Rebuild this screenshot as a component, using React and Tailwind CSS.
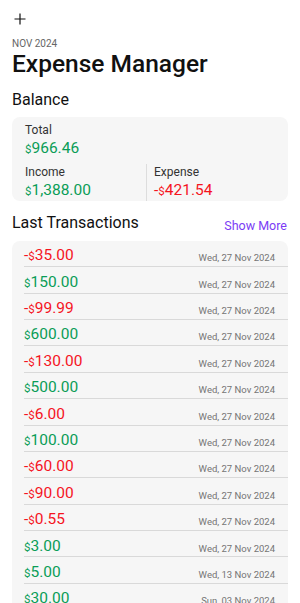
import React from "react";

const rows = [
  ["-", "35.00", "Wed, 27 Nov 2024"],
  ["+", "150.00", "Wed, 27 Nov 2024"],
  ["-", "99.99", "Wed, 27 Nov 2024"],
  ["+", "600.00", "Wed, 27 Nov 2024"],
  ["-", "130.00", "Wed, 27 Nov 2024"],
  ["+", "500.00", "Wed, 27 Nov 2024"],
  ["-", "6.00", "Wed, 27 Nov 2024"],
  ["+", "100.00", "Wed, 27 Nov 2024"],
  ["-", "60.00", "Wed, 27 Nov 2024"],
  ["-", "90.00", "Wed, 27 Nov 2024"],
  ["-", "0.55", "Wed, 27 Nov 2024"],
  ["+", "3.00", "Wed, 27 Nov 2024"],
  ["+", "5.00", "Wed, 13 Nov 2024"],
  ["+", "30.00", "Sun, 03 Nov 2024"],
];

function Amount({ sign, value }) {
  const neg = sign === "-";
  return (
    <span className={neg ? "text-[#f5141e]" : "text-[#0a9d57]"}>
      {neg ? "-" : ""}
      <span className="text-[11.5px]">$</span>
      {value}
    </span>
  );
}

export default function App() {
  return (
    <div
      className="w-[300px] h-[603px] overflow-hidden bg-white px-3 text-[#111]"
      style={{ fontFamily: "Roboto, 'Noto Sans', sans-serif" }}
    >
      <div className="h-[37.6px] pt-[13px] pl-[2px]">
        <svg width="12" height="12" viewBox="0 0 12 12" fill="none">
          <path d="M6 0.5V11.5M0.5 6H11.5" stroke="#111" strokeWidth="1.2" />
        </svg>
      </div>
      <div className="text-[10px] leading-[12px] text-[#666]">NOV 2024</div>
      <div className="text-[24.5px] leading-[28px] font-medium">Expense Manager</div>
      <div className="mt-[12.7px] text-[16px] leading-[20px]">Balance</div>

      <div className="mt-[6.5px] h-[84px] rounded-[8px] bg-[#f6f6f6] px-[13px] pt-[5px]">
        <div className="text-[12px] leading-[16px] text-[#333]">Total</div>
        <div className="text-[15.5px] leading-[20px]">
          <Amount sign="+" value="966.46" />
        </div>
        <div className="mt-[5.4px] flex">
          <div className="flex-1">
            <div className="text-[12px] leading-[16px] text-[#333]">Income</div>
            <div className="text-[15.5px] leading-[20px]">
              <Amount sign="+" value="1,388.00" />
            </div>
          </div>
          <div className="flex-1 border-l border-[#dddddd] pl-[7px]">
            <div className="text-[12px] leading-[16px] text-[#333]">Expense</div>
            <div className="text-[15.5px] leading-[20px]">
              <Amount sign="-" value="421.54" />
            </div>
          </div>
        </div>
      </div>

      <div className="mt-[12.5px] flex items-baseline justify-between">
        <div className="text-[16px] leading-[20px]">Last Transactions</div>
        <div className="text-[12.5px] leading-[20px] text-[#7b3cf5] translate-y-[2px] pr-[1px]">Show More</div>
      </div>

      <div className="mt-[6.5px] rounded-t-[8px] bg-[#f6f6f6] pl-[12px]">
        {rows.map(([s, v, d], i) => (
          <div
            key={i}
            className="flex h-[26.4px] items-baseline justify-between border-b border-[#d9d9d9] pt-[4.5px] pr-[13px]"
          >
            <span className="text-[15.5px] leading-[20px]">
              <Amount sign={s} value={v} />
            </span>
            <span className="text-[9.5px] leading-[12px] text-[#747474] translate-y-[0.5px]">{d}</span>
          </div>
        ))}
      </div>
    </div>
  );
}
